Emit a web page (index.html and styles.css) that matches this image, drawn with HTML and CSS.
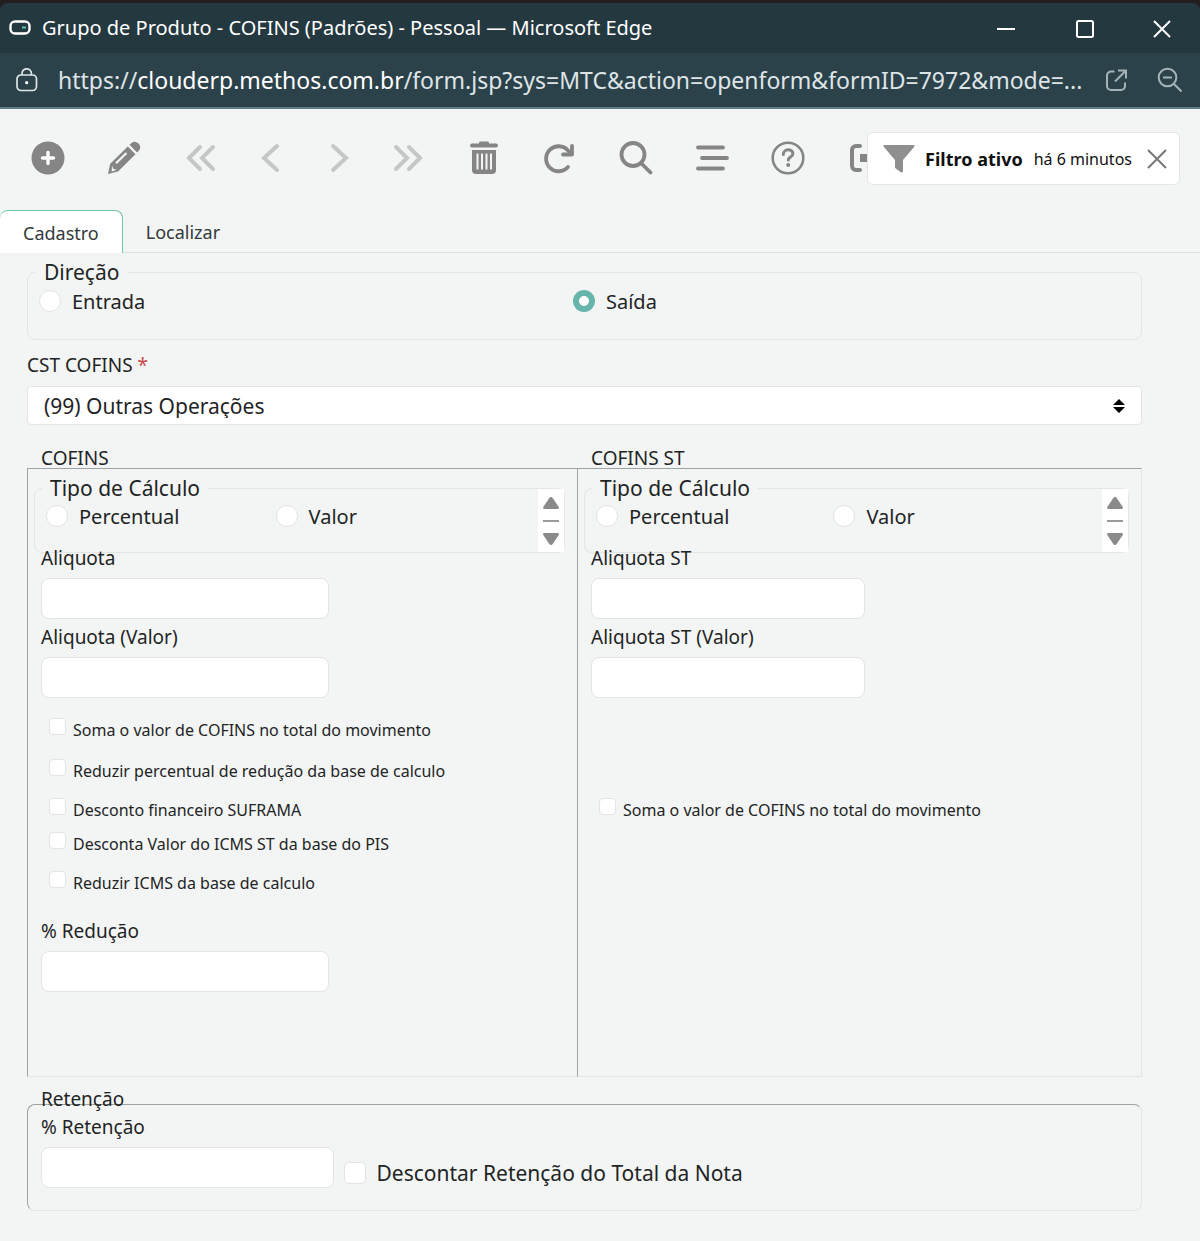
FILE: index.html
```html
<!DOCTYPE html>
<html lang="pt-BR">
<head>
  <meta charset="UTF-8">
  <title>Grupo de Produto - COFINS (Padrões)</title>
  <link rel="stylesheet" href="styles.css">
</head>
<body>

  <header class="window">
    <div class="titlebar">
      <svg class="app-icon" width="22" height="16" viewBox="0 0 22 16" fill="none">
        <rect x="1.5" y="1.5" width="19" height="12" rx="4.5" stroke="#fff" stroke-width="2.4"/>
        <path d="M13 7.5h4" stroke="#5fc9a8" stroke-width="2"/>
      </svg>
      <span class="window-title">Grupo de Produto - COFINS (Padrões) - Pessoal — Microsoft Edge</span>
      <div class="window-buttons">
        <button type="button" aria-label="Minimizar">
          <svg width="20" height="20" viewBox="0 0 20 20"><path d="M1 11h18"/></svg>
        </button>
        <button type="button" aria-label="Maximizar">
          <svg width="20" height="20" viewBox="0 0 20 20"><rect x="2" y="3" width="16" height="16" rx="1.5"/></svg>
        </button>
        <button type="button" aria-label="Fechar">
          <svg width="20" height="20" viewBox="0 0 20 20"><path d="M2 3l16 16M18 3L2 19"/></svg>
        </button>
      </div>
    </div>
    <div class="address">
      <svg class="lock" width="22" height="24" viewBox="0 0 22 24" fill="none" stroke="#dfe6e8" stroke-width="1.7">
        <rect x="1" y="7" width="19.500" height="15.500" rx="4"/>
        <path d="M6 7V5.500a4.700 4.700 0 0 1 9.400 0V7"/>
        <circle cx="10.700" cy="14.700" r="1.600" fill="#fff" stroke="none"/>
      </svg>
      <span class="url">https://<b>clouderp.methos.com.br</b>/form.jsp?sys=MTC&amp;action=openform&amp;formID=7972&amp;mode=...</span>
      <button type="button" class="address-button" aria-label="Abrir em nova aba">
        <svg width="24" height="24" viewBox="0 0 24 24"><path d="M9.500 3.500H6a4 4 0 0 0-4 4V18a4 4 0 0 0 4 4h10a4 4 0 0 0 4-4v-3.500M13 2.500h8v8M21 2.500L10 13.500"/></svg>
      </button>
      <button type="button" class="address-button" aria-label="Reduzir zoom">
        <svg width="26" height="26" viewBox="0 0 26 26"><circle cx="10.500" cy="10.500" r="8.800"/><path d="M6 10.500h9M17 17l7.500 7.500"/></svg>
      </button>
    </div>
  </header>

  <nav class="toolbar">
    <button type="button" aria-label="Novo">
      <svg width="34" height="34" viewBox="0 0 34 34"><circle cx="17" cy="17" r="16.500" fill="#858585"/><path d="M17 11.500v11M11.500 17h11" stroke="#fff" stroke-width="3.400" stroke-linecap="round"/></svg>
    </button>
    <button type="button" aria-label="Editar">
      <svg width="34" height="34" viewBox="0 0 34 34" fill="#858585">
        <path d="M22.500 3.800l2-1.900a4.600 4.600 0 0 1 6.400.2l1 1a4.600 4.600 0 0 1 .1 6.400l-2 2z"/>
        <path d="M20.800 5.500l7.700 7.700L11 30.600 1 33l2.200-10.300z"/>
        <path d="M19.500 12L9 22.300" stroke="#f2f5f4" stroke-width="2.200"/>
        <path d="M5 24.500l1.200 3.300 3.500 1.100-5 1.600z" fill="#f2f5f4"/>
      </svg>
    </button>
    <div class="pager">
      <button type="button" aria-label="Primeiro">
        <svg width="30" height="30" viewBox="0 0 30 30"><path d="M14 4L3 15l11 11M27 4L16 15l11 11"/></svg>
      </button>
      <button type="button" aria-label="Anterior">
        <svg width="30" height="30" viewBox="0 0 30 30"><path d="M22 3L9 15l13 12"/></svg>
      </button>
      <button type="button" aria-label="Próximo">
        <svg width="30" height="30" viewBox="0 0 30 30"><path d="M9 3l13 12L9 27"/></svg>
      </button>
      <button type="button" aria-label="Último">
        <svg width="30" height="30" viewBox="0 0 30 30"><path d="M3 4l11 11L3 26M16 4l11 11-11 11"/></svg>
      </button>
    </div>
    <button type="button" aria-label="Excluir">
      <svg width="30" height="34" viewBox="0 0 30 34"><path d="M10 1.500L11 .5h8l1 1v1h7a1.800 1.800 0 0 1 0 4H3a1.800 1.800 0 0 1 0-4h7zM3 9h24v20a4 4 0 0 1-4 4H7a4 4 0 0 1-4-4z" fill="#858585"/><path d="M8.500 12.500v16M13 12.500v16M17.500 12.500v16M22 12.500v16" stroke="#f2f5f4" stroke-width="2"/></svg>
    </button>
    <button type="button" aria-label="Atualizar">
      <svg width="34" height="32" viewBox="0 0 34 32" fill="none" stroke="#858585" stroke-width="3.800" stroke-linecap="round"><path d="M25 25A12.500 12.500 0 1 1 25 8.500l3 3"/><path d="M29 4v8.500h-9" stroke-linejoin="round"/></svg>
    </button>
    <button type="button" aria-label="Pesquisar">
      <svg width="34" height="34" viewBox="0 0 34 34" fill="none" stroke="#858585" stroke-width="3.800" stroke-linecap="round"><circle cx="14" cy="13.500" r="11.500"/><path d="M22.500 22.500l9 9"/></svg>
    </button>
    <button type="button" aria-label="Menu">
      <svg width="34" height="26" viewBox="0 0 34 26" stroke="#858585" stroke-width="3.800" stroke-linecap="round"><path d="M3 2.500h25M7 13h25M3 23.500h25"/></svg>
    </button>
    <button type="button" aria-label="Ajuda">
      <svg width="34" height="34" viewBox="0 0 34 34" fill="none" stroke="#858585" stroke-width="2.600"><circle cx="17" cy="17" r="15.300"/><path d="M12.300 13.500c0-6.200 9.600-6 9.600-.8 0 3.400-4.600 3.300-4.600 6.300" stroke-width="3" stroke-linecap="round"/><circle cx="17.200" cy="24" r="2" fill="#858585" stroke="none"/></svg>
    </button>
    <button type="button" aria-label="Sair">
      <svg width="30" height="30" viewBox="0 0 30 30" fill="none" stroke="#858585" stroke-width="4"><path d="M11 3H7a4 4 0 0 0-4 4v16a4 4 0 0 0 4 4h4" stroke-linecap="round"/><path d="M11 15h16" stroke-width="8"/></svg>
    </button>

    <div class="filter-notice">
      <svg width="32" height="28" viewBox="0 0 32 28" fill="#8f8f8f"><path d="M1.500 0h29a1 1 0 0 1 .8 1.700L20 15v11a1.500 1.500 0 0 1-2.200 1.300l-5-3.800a2 2 0 0 1-.8-1.600V15L.7 1.700A1 1 0 0 1 1.500 0z"/></svg>
      <strong>Filtro ativo</strong>
      <span>há 6 minutos</span>
      <button type="button" aria-label="Remover filtro">
        <svg width="20" height="20" viewBox="0 0 20 20"><path d="M1 1l18 18M19 1L1 19" stroke="#777" stroke-width="2"/></svg>
      </button>
    </div>
  </nav>

  <div class="tabs">
    <button type="button" class="tab active">Cadastro</button>
    <button type="button" class="tab">Localizar</button>
  </div>

  <form class="form">
    <fieldset class="group direction">
      <legend>Direção</legend>
      <label class="option"><input type="radio" name="direcao"><span>Entrada</span></label>
      <label class="option"><input type="radio" name="direcao" checked><span>Saída</span></label>
    </fieldset>

    <label class="label cst-label" for="cst">CST COFINS <span class="required">*</span></label>
    <div class="select">
      <select id="cst">
        <option>(99) Outras Operações</option>
      </select>
      <svg width="12" height="14" viewBox="0 0 12 14"><path d="M0 6l6-6 6 6zM0 8h12l-6 6z"/></svg>
    </div>

    <div class="columns">
      <section>
        <h2>COFINS</h2>
        <div class="panel">
          <fieldset class="group calc">
            <legend>Tipo de Cálculo</legend>
            <label class="option"><input type="radio" name="tipo"><span>Percentual</span></label>
            <label class="option"><input type="radio" name="tipo"><span>Valor</span></label>
            <div class="scroller">
              <button type="button" aria-label="Subir"><svg width="16" height="12" viewBox="0 0 16 12"><path d="M6.300 1a2.200 2.200 0 0 1 3.400 0l6 9c.6 1 0 2-1 2H1.300c-1 0-1.600-1-1-2z"/></svg></button>
              <button type="button" aria-label="Descer"><svg width="16" height="12" viewBox="0 0 16 12"><path d="M6.300 11a2.200 2.200 0 0 0 3.400 0l6-9c.6-1 0-2-1-2H1.300c-1 0-1.600 1-1 2z"/></svg></button>
            </div>
          </fieldset>
          <div class="fields">
            <div class="field">
              <label class="label" for="aliquota">Aliquota</label>
              <input type="text" id="aliquota">
            </div>
            <div class="field">
              <label class="label" for="aliquota-valor">Aliquota (Valor)</label>
              <input type="text" id="aliquota-valor">
            </div>
            <div class="checks">
              <label class="check"><input type="checkbox"><span>Soma o valor de COFINS no total do movimento</span></label>
              <label class="check"><input type="checkbox"><span>Reduzir percentual de redução da base de calculo</span></label>
              <label class="check"><input type="checkbox"><span>Desconto financeiro SUFRAMA</span></label>
              <label class="check"><input type="checkbox"><span>Desconta Valor do ICMS ST da base do PIS</span></label>
              <label class="check"><input type="checkbox"><span>Reduzir ICMS da base de calculo</span></label>
            </div>
            <div class="field">
              <label class="label" for="reducao">% Redução</label>
              <input type="text" id="reducao">
            </div>
          </div>
        </div>
      </section>

      <section>
        <h2>COFINS ST</h2>
        <div class="panel panel-st">
          <fieldset class="group calc">
            <legend>Tipo de Cálculo</legend>
            <label class="option"><input type="radio" name="tipo-st"><span>Percentual</span></label>
            <label class="option"><input type="radio" name="tipo-st"><span>Valor</span></label>
            <div class="scroller">
              <button type="button" aria-label="Subir"><svg width="16" height="12" viewBox="0 0 16 12"><path d="M6.300 1a2.200 2.200 0 0 1 3.400 0l6 9c.6 1 0 2-1 2H1.300c-1 0-1.600-1-1-2z"/></svg></button>
              <button type="button" aria-label="Descer"><svg width="16" height="12" viewBox="0 0 16 12"><path d="M6.300 11a2.200 2.200 0 0 0 3.400 0l6-9c.6-1 0-2-1-2H1.300c-1 0-1.600 1-1 2z"/></svg></button>
            </div>
          </fieldset>
          <div class="fields">
            <div class="field">
              <label class="label" for="aliquota-st">Aliquota ST</label>
              <input type="text" id="aliquota-st">
            </div>
            <div class="field">
              <label class="label" for="aliquota-st-valor">Aliquota ST (Valor)</label>
              <input type="text" id="aliquota-st-valor">
            </div>
            <div class="checks">
              <label class="check"><input type="checkbox"><span>Soma o valor de COFINS no total do movimento</span></label>
            </div>
          </div>
        </div>
      </section>
    </div>

    <fieldset class="group retention">
      <legend>Retenção</legend>
      <div class="field">
        <label class="label" for="retencao">% Retenção</label>
        <input type="text" id="retencao">
      </div>
      <label class="check-large"><input type="checkbox"><span>Descontar Retenção do Total da Nota</span></label>
    </fieldset>
  </form>

</body>
</html>
```

FILE: styles.css
```css
* {
  box-sizing: border-box;
}
body {
  margin: 0;
  background-color: #f2f5f4;
  color: #1f2424;
  font-family: "Noto Sans", "Open Sans", sans-serif;
  font-size: 18px;
  line-height: 24px;
}
button {
  border: none;
  padding: 0;
  background: none;
  font: inherit;
  color: inherit;
  cursor: pointer;
}
svg {
  display: block;
  flex-shrink: 0;
}
input, select {
  margin: 0;
  font: inherit;
}
fieldset {
  margin: 0;
  min-width: 0;
}

/* browser window */
.window {
  padding-top: 3px;
  background-color: #231f1e;
  color: #fff;
}
.titlebar {
  display: flex;
  align-items: center;
  height: 50px;
  padding-left: 9px;
  border-radius: 8px 8px 0 0;
  background-color: #24383f;
}
.window-title {
  flex: 1;
  margin-left: 11px;
  font-size: 20px;
  white-space: nowrap;
}
.window-buttons {
  display: flex;
}
.window-buttons button {
  display: flex;
  align-items: center;
  justify-content: center;
  width: 79px;
  height: 50px;
}
.window-buttons button:last-child {
  width: 76px;
}
.window-buttons svg {
  fill: none;
  stroke: #fff;
  stroke-width: 2;
}
.address {
  display: flex;
  align-items: center;
  height: 56px;
  padding: 0 17px 0 16px;
  border-bottom: 2px solid #5d7d83;
  background-color: #2c424a;
}
.url {
  flex: 1;
  margin-left: 20px;
  color: #dfe5e7;
  font-size: 23px;
  white-space: nowrap;
}
.url b {
  color: #fff;
  font-weight: normal;
}
.address-button {
  margin-left: 28px;
}
.url + .address-button {
  margin-left: 20px;
}
.address-button svg {
  fill: none;
  stroke: #a5b4b9;
  stroke-width: 2;
}

/* toolbar */
.toolbar {
  position: relative;
  display: flex;
  align-items: center;
  height: 101px;
  padding: 0 0 3px 10px;
}
.toolbar > button {
  display: flex;
  align-items: center;
  justify-content: center;
  width: 76px;
  height: 48px;
}
.pager {
  display: flex;
  margin: 0 4px;
}
.pager button {
  display: flex;
  align-items: center;
  justify-content: center;
  width: 69px;
  height: 48px;
}
.pager svg {
  fill: none;
  stroke: #c4c7c6;
  stroke-width: 4;
  stroke-linecap: round;
}
.filter-notice {
  position: absolute;
  top: 23px;
  right: 20px;
  display: flex;
  align-items: center;
  height: 53px;
  padding: 0 12px 0 15px;
  border: 1px solid #e3e6e5;
  border-radius: 6px;
  background-color: #fff;
  color: #111;
}
.filter-notice strong {
  margin: 0 11px 0 10px;
}
.filter-notice span {
  font-size: 16px;
}
.filter-notice button {
  margin-left: 15px;
}

/* tabs */
.tabs {
  display: flex;
  height: 43px;
  border-bottom: 1px solid #dfe3e2;
}
.tab {
  height: 43px;
  padding: 1px 23px 0;
  color: #333a3a;
}
.tab.active {
  border: 1px solid #6fc4ae;
  border-width: 1px 1px 0 0;
  border-radius: 8px 8px 0 0;
  background-color: #fff;
}

/* form */
.form {
  padding: 19px 58px 30px 27px;
}
.group {
  position: relative;
  padding: 0;
  border: 1px solid #e1e5e4;
  border-radius: 8px;
}
.group legend {
  position: absolute;
  top: -13px;
  left: 8px;
  padding: 0 8px;
  background-color: #f2f5f4;
  font-size: 21px;
}
.option {
  display: flex;
  align-items: flex-start;
  font-size: 20px;
}
.option input {
  appearance: none;
  width: 22px;
  height: 22px;
  margin-right: 11px;
  border: 1px solid #e1e5e4;
  border-radius: 50%;
  background-color: #fff;
}
.option input:checked {
  border: 6px solid #68b5ac;
}
.direction {
  display: grid;
  grid-template-columns: 1fr 1fr;
  height: 68px;
  padding: 17px 34px 0 11px;
}
.label {
  display: block;
  font-size: 19px;
}
.cst-label {
  margin: 13px 0 9px;
}
.required {
  color: #c9474b;
}
.select {
  display: grid;
  align-items: center;
}
.select select,
.select svg {
  grid-area: 1 / 1;
}
.select select {
  appearance: none;
  height: 39px;
  padding: 0 16px;
  border: 1px solid #e1e5e4;
  border-radius: 4px;
  background-color: #fff;
  color: #1f2424;
  font-size: 21px;
}
.select svg {
  justify-self: end;
  margin-right: 17px;
  pointer-events: none;
}

/* COFINS panels */
.columns {
  display: grid;
  grid-template-columns: 550fr 565fr;
  margin-top: 23px;
}
.columns section {
  display: flex;
  flex-direction: column;
}
.columns h2 {
  margin: 0 0 0 14px;
  font-size: 19px;
  font-weight: normal;
  line-height: 20px;
}
.panel {
  flex: 1;
  padding: 19px 12px 84px 6px;
  border: 1px solid #e1e5e4;
  border-width: 1px 0 1px 1px;
  border-top-color: #9da3a2;
  border-left-color: #9da3a2;
}
.panel-st {
  border-right-width: 1px;
}
.calc {
  display: grid;
  grid-template-columns: 234fr 294fr;
  height: 65px;
  padding: 16px 0 0 11px;
}
.panel-st .calc {
  grid-template-columns: 237fr 294fr;
}
.calc legend {
  left: 7px;
}
.scroller {
  position: absolute;
  top: 0;
  right: 0;
  bottom: 0;
  display: flex;
  flex-direction: column;
  align-items: center;
  justify-content: center;
  width: 26px;
  background-color: #fff;
}
.scroller button:first-child {
  padding-bottom: 11px;
  border-bottom: 2px solid #9a9a9a;
}
.scroller button:last-child {
  padding-top: 11px;
}
.scroller svg {
  fill: #8a8a8a;
}
.fields {
  position: relative;
  margin: -7px 0 0 7px;
}
.field + .field {
  margin-top: 6px;
}
.field input {
  display: block;
  width: 55%;
  height: 41px;
  margin-top: 8px;
  padding: 0 12px;
  border: 1px solid #e1e5e4;
  border-radius: 8px;
  background-color: #fff;
}
.panel-st .field input {
  width: 51%;
}
.checks {
  display: grid;
  grid-template-rows: 41px 39px 34px 39px 24px;
  margin: 20px 0 24px 8px;
}
.panel-st .checks {
  grid-template-rows: 24px;
  margin-top: 100px;
}
.check {
  display: flex;
  align-items: flex-start;
  font-size: 16px;
}
.check input {
  appearance: none;
  width: 17px;
  height: 17px;
  margin-right: 7px;
  border: 1px solid #e1e5e4;
  border-radius: 4px;
  background-color: #fff;
}

/* retention */
.retention {
  display: flex;
  align-items: flex-end;
  height: 107px;
  margin-top: 27px;
  padding: 0 13px 22px;
  border-top-color: #9da3a2;
  border-left-color: #9da3a2;
}
.retention legend {
  top: -18px;
  left: 13px;
  padding: 0;
  background: none;
  font-size: 19px;
}
.retention .field {
  width: 27%;
}
.retention .field input {
  width: 100%;
}
.check-large {
  display: flex;
  align-items: center;
  margin: 0 0 3px 10px;
  font-size: 21px;
}
.check-large input {
  appearance: none;
  width: 22px;
  height: 22px;
  margin-right: 10px;
  border: 1px solid #e1e5e4;
  border-radius: 5px;
  background-color: #fff;
}
```
